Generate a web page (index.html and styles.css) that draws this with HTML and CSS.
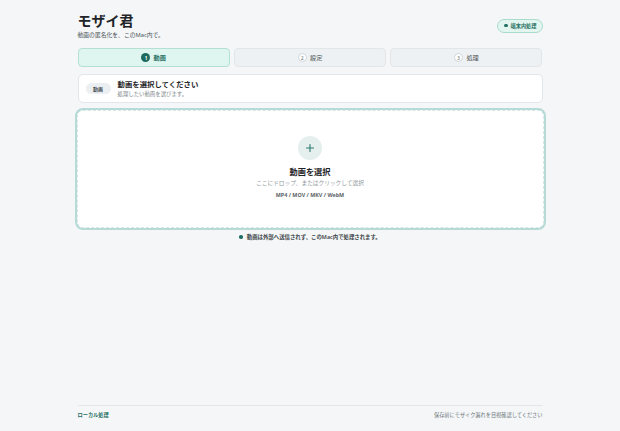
FILE: index.html
```html
<!DOCTYPE html>
<html lang="ja">
<head>
    <meta charset="UTF-8">
    <meta name="viewport" content="width=device-width, initial-scale=1.0">
    <title>モザイ君</title>
    <link rel="stylesheet" href="styles.css">
</head>
<body>
    <div class="app">
        <header class="header">
            <div>
                <h1 class="title">モザイ君</h1>
                <p class="subtitle">動画の匿名化を、このMac内で。</p>
            </div>
            <span class="badge"><span class="dot"></span>端末内処理</span>
        </header>

        <nav class="steps">
            <div class="step active"><span class="num">1</span>動画</div>
            <div class="step"><span class="num">2</span>設定</div>
            <div class="step"><span class="num">3</span>処理</div>
        </nav>

        <section class="card">
            <span class="tag">動画</span>
            <div>
                <div class="card-title">動画を選択してください</div>
                <div class="card-sub">処理したい動画を選びます。</div>
            </div>
        </section>

        <label class="drop">
            <span class="plus">
                <svg width="10" height="10" viewBox="0 0 10 10"><path d="M5 1.5v7M1.5 5h7" stroke="#2b7a70" stroke-width="1.1" stroke-linecap="round"/></svg>
            </span>
            <span class="drop-title">動画を選択</span>
            <span class="drop-sub">ここにドロップ、またはクリックして選択</span>
            <span class="formats">MP4 / MOV / MKV / WebM</span>
        </label>

        <p class="note"><span class="dot"></span>動画は外部へ送信されず、このMac内で処理されます。</p>

        <footer class="footer">
            <span class="local">ローカル処理</span>
            <span>保存前にモザイク漏れを目視確認してください</span>
        </footer>
    </div>
</body>
</html>
```

FILE: styles.css
```css
body {
    margin: 0;
    background: #f4f6f8;
    font-family: "Noto Sans", "Noto Sans CJK JP", sans-serif;
    color: #1e2427;
}
.app {
    width: 465px;
    margin: 0 auto;
    min-height: 100vh;
    display: flex;
    flex-direction: column;
    padding-top: 12px;
    box-sizing: border-box;
}
.header {
    display: flex;
    justify-content: space-between;
    align-items: center;
}
.title {
    margin: 0;
    font-size: 14px;
    line-height: 18px;
    font-weight: 700;
}
.subtitle {
    margin: 1px 0 0;
    font-size: 5.8px;
    line-height: 8px;
    color: #4a5357;
}
.badge {
    display: flex;
    align-items: center;
    gap: 3px;
    height: 12px;
    padding: 0 5px 0 6px;
    border: 1px solid #a9dccd;
    border-radius: 8px;
    background: #e2f5ee;
    color: #1f6f64;
    font-size: 5.2px;
    font-weight: 700;
}
.dot {
    width: 3.5px;
    height: 3.5px;
    border-radius: 50%;
    background: #1f6f64;
}
.steps {
    display: grid;
    grid-template-columns: repeat(3, 1fr);
    gap: 4px;
    margin-top: 9px;
}
.step {
    height: 17px;
    display: flex;
    align-items: center;
    justify-content: center;
    gap: 3px;
    border: 1px solid #e2e6e9;
    border-radius: 4px;
    background: #eef1f3;
    color: #4d5559;
    font-size: 6.2px;
}
.step .num {
    width: 7.5px;
    height: 7.5px;
    border-radius: 50%;
    border: 0.8px solid #cfd5d9;
    background: #fff;
    display: flex;
    align-items: center;
    justify-content: center;
    font-size: 4.6px;
    color: #5b6468;
}
.step.active {
    background: #dff5ef;
    border-color: #b3e0d3;
    color: #1f6f64;
    font-weight: 700;
}
.step.active .num {
    width: 9px;
    height: 9px;
    border: none;
    background: #1c6a5f;
    color: #fff;
    font-weight: 700;
}
.card {
    margin-top: 7px;
    height: 29px;
    box-sizing: border-box;
    display: flex;
    align-items: center;
    gap: 7px;
    padding: 0 7px;
    background: #fff;
    border: 1px solid #e3e7ea;
    border-radius: 5px;
}
.tag {
    width: 25px;
    height: 11px;
    border-radius: 6px;
    background: #eceff1;
    display: flex;
    align-items: center;
    justify-content: center;
    font-size: 5px;
    color: #4a5357;
    font-weight: 700;
}
.card-title {
    font-size: 7.4px;
    line-height: 10px;
    font-weight: 700;
}
.card-sub {
    margin-top: 1px;
    font-size: 5.4px;
    line-height: 8px;
    color: #7e878b;
}
.drop {
    margin-top: 7px;
    margin-left: -1px;
    margin-right: -1px;
    height: 118px;
    box-sizing: border-box;
    display: flex;
    flex-direction: column;
    align-items: center;
    padding-top: 25px;
    background: #fff;
    border: 1px dashed #d6e7e6;
    border-radius: 6px;
    box-shadow: 0 0 0 2px #b6dbd7;
}
.plus {
    width: 24px;
    height: 24px;
    border-radius: 50%;
    background: #e4efee;
    display: flex;
    align-items: center;
    justify-content: center;
}
.drop-title {
    margin-top: 6px;
    font-size: 8.2px;
    line-height: 11px;
    font-weight: 700;
}
.drop-sub {
    margin-top: 2px;
    font-size: 5.7px;
    line-height: 8px;
    color: #8f989c;
}
.formats {
    margin-top: 4px;
    font-size: 5.4px;
    line-height: 8px;
    font-weight: 700;
    color: #5b6468;
}
.note {
    margin: 5px 0 0;
    display: flex;
    align-items: center;
    justify-content: center;
    gap: 4px;
    font-size: 5.4px;
    line-height: 8px;
    color: #3b4447;
    font-weight: 600;
}
.footer {
    margin-top: auto;
    border-top: 1px solid #e3e7ea;
    padding: 5px 0 12px;
    display: flex;
    justify-content: space-between;
    font-size: 5.2px;
    line-height: 8px;
    color: #6e777b;
}
.local {
    color: #1f6f64;
    font-weight: 700;
}
```
